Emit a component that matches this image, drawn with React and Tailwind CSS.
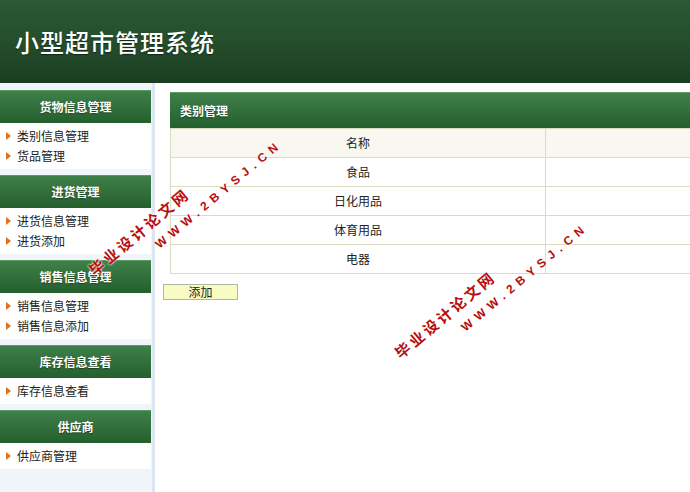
import React from 'react';

// ─── Data ─────────────────────────────────────────────────────────────────────

const MENU = [
  { title: '货物信息管理', items: ['类别信息管理', '货品管理'] },
  { title: '进货管理',     items: ['进货信息管理', '进货添加'] },
  { title: '销售信息管理', items: ['销售信息管理', '销售信息添加'] },
  { title: '库存信息查看', items: ['库存信息查看'] },
  { title: '供应商',       items: ['供应商管理'] },
];

const CATEGORIES = ['食品', '日化用品', '体育用品', '电器'];

const FONT = 'font-["Noto_Sans_CJK_SC","Noto_Sans",sans-serif]';

// ─── Sidebar ──────────────────────────────────────────────────────────────────

function MenuSection({ title, items }) {
  return (
    <div className="mb-[6px]">
      <div className="h-[33px] flex items-center justify-center border-t border-[#5a9a63] bg-gradient-to-b from-[#3f8049] to-[#245f2e] text-[12px] font-bold text-white [text-shadow:0_1px_1px_rgba(0,0,0,0.4)]">
        {title}
      </div>
      <ul className="bg-white py-[3px]">
        {items.map((item) => (
          <li key={item} className="h-[20px] flex items-center pl-[6px] text-[12px] text-[#222]">
            <span className="w-0 h-0 border-y-[4px] border-y-transparent border-l-[5px] border-l-[#e0701e] mr-[6px]" />
            {item}
          </li>
        ))}
      </ul>
    </div>
  );
}

// ─── Watermark ────────────────────────────────────────────────────────────────

function Watermark({ x, y }) {
  return (
    <>
      <span
        className="absolute h-4 leading-4 whitespace-nowrap origin-[0_50%] -rotate-[40deg] text-[15px] font-bold tracking-[3px] text-[#b80d0d] [text-shadow:0_0_2px_#fff,0_0_2px_#fff]"
        style={{ left: x, top: y - 8 }}
      >
        毕业设计论文网
      </span>
      <span
        className="absolute h-4 leading-4 whitespace-nowrap origin-[0_50%] -rotate-[40deg] text-[12px] font-bold tracking-[5.5px] text-[#b80d0d] font-['Liberation_Sans',sans-serif] [text-shadow:0_0_2px_#fff,0_0_2px_#fff]"
        style={{ left: x + 66, top: y - 34 }}
      >
        WWW.2BYSJ.CN
      </span>
    </>
  );
}

// ─── Page ─────────────────────────────────────────────────────────────────────

export default function App() {
  return (
    <div className={`relative w-[690px] h-[492px] overflow-hidden bg-white ${FONT}`}>
      {/* Header */}
      <header className="h-[83px] flex items-center pl-[15px] bg-gradient-to-b from-[#2b5a34] via-[#244e2c] to-[#1b3e22]">
        <h1 className="text-[24px] tracking-[1px] text-white font-medium [text-shadow:0_1px_1px_rgba(0,0,0,0.5)]">
          小型超市管理系统
        </h1>
      </header>

      <div className="flex h-[409px]">
        {/* Sidebar */}
        <aside className="w-[155px] shrink-0 bg-[#f0f5fa] border-r-[3px] border-[#dce6f1] pt-[7px] pr-[1px]">
          {MENU.map((s) => <MenuSection key={s.title} {...s} />)}
        </aside>

        {/* Main */}
        <main className="flex-1 pt-[9px] pl-[8px] overflow-hidden">
          <div className="ml-[7px] w-[560px]">
            <div className="h-[36px] flex items-center pl-[10px] border-t border-[#5a9a63] bg-gradient-to-b from-[#3f8049] to-[#245f2e] text-[12px] font-bold text-white [text-shadow:0_1px_1px_rgba(0,0,0,0.4)]">
              类别管理
            </div>
            <table className="w-full border-collapse border border-[#d9dcc2] text-[12px] text-[#222]">
              <tbody>
                <tr className="h-[29px] bg-[#f9f8f0]">
                  <td className="w-[375px] border border-[#d9dcc2] text-center">名称</td>
                  <td className="border border-[#d9dcc2]" />
                </tr>
                {CATEGORIES.map((c) => (
                  <tr key={c} className="h-[29px] bg-white">
                    <td className="border border-[#d9dcc2] text-center">{c}</td>
                    <td className="border border-[#d9dcc2]" />
                  </tr>
                ))}
              </tbody>
            </table>
          </div>
          <button className="mt-[10px] w-[75px] h-[16px] flex items-center justify-center bg-[#f8fbc2] border border-[#b3b5a3] text-[12px] leading-none text-[#222]">
            添加
          </button>
        </main>
      </div>

      <Watermark x={91} y={272} />
      <Watermark x={397} y={355} />
    </div>
  );
}
